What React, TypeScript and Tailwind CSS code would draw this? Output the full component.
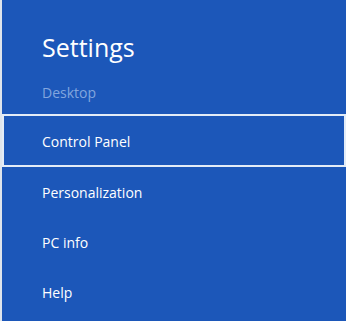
const items = ['Control Panel', 'Personalization', 'PC info', 'Help'];

export default function App() {
  return (
    <div
      className="flex h-[321px] w-[346px] overflow-hidden bg-[#1c57b9]"
      style={{ fontFamily: '"Open Sans", "Noto Sans", sans-serif' }}
    >
      <div className="w-[2px] shrink-0 bg-[#dfe5ec]" />
      <div className="flex flex-1 flex-col pt-[30px]">
        <h1 className="pl-[40px] text-[25px] leading-[34px] font-normal text-white">Settings</h1>
        <div className="flex h-[50px] items-center pt-[7px] pl-[40px] text-[14px] text-[#82a6de]">Desktop</div>
        {items.map((label, i) => (
          <div
            key={label}
            className={
              i === 0
                ? 'flex h-[53px] items-center border-2 border-[#e3ecf7] pt-[2px] pl-[38px] text-[14px] text-white'
                : 'flex h-[50px] items-center pl-[40px] text-[14px] text-white'
            }
          >
            {label}
          </div>
        ))}
      </div>
    </div>
  );
}
